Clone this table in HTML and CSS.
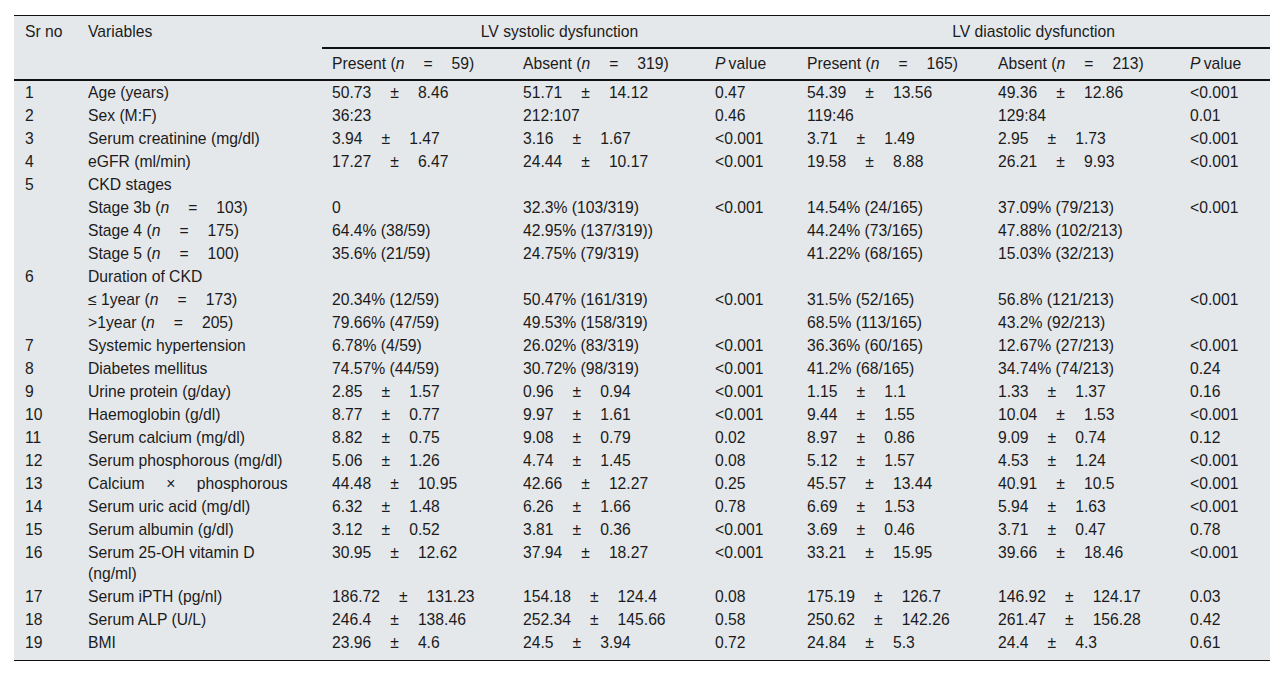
FILE: index.html
```html
<!DOCTYPE html>
<html lang="en">
<head>
<meta charset="utf-8">
<title>LV dysfunction table</title>
<link rel="stylesheet" href="styles.css">
</head>
<body>
<table class="tbl">
  <colgroup>
    <col class="c-sr"><col class="c-var"><col class="c-pres"><col class="c-abs"><col class="c-p"><col class="c-pres"><col class="c-abs"><col class="c-p2">
  </colgroup>
  <thead>
    <tr class="h1">
      <th rowspan="2" class="sr">Sr no</th>
      <th rowspan="2">Variables</th>
      <th colspan="3" class="grp">LV systolic dysfunction</th>
      <th colspan="3" class="grp">LV diastolic dysfunction</th>
    </tr>
    <tr class="h2">
      <th>Present (<i>n</i><span class="op">=</span>59)</th>
      <th>Absent (<i>n</i><span class="op">=</span>319)</th>
      <th><i>P</i>&thinsp;value</th>
      <th>Present (<i>n</i><span class="op">=</span>165)</th>
      <th>Absent (<i>n</i><span class="op">=</span>213)</th>
      <th><i>P</i>&thinsp;value</th>
    </tr>
  </thead>
  <tbody>
    <tr><td class="sr">1</td><td>Age (years)</td><td>50.73<span class="op">±</span>8.46</td><td>51.71<span class="op">±</span>14.12</td><td>0.47</td><td>54.39<span class="op">±</span>13.56</td><td>49.36<span class="op">±</span>12.86</td><td>&lt;0.001</td></tr>
    <tr><td class="sr">2</td><td>Sex (M:F)</td><td>36:23</td><td>212:107</td><td>0.46</td><td>119:46</td><td>129:84</td><td>0.01</td></tr>
    <tr><td class="sr">3</td><td>Serum creatinine (mg/dl)</td><td>3.94<span class="op">±</span>1.47</td><td>3.16<span class="op">±</span>1.67</td><td>&lt;0.001</td><td>3.71<span class="op">±</span>1.49</td><td>2.95<span class="op">±</span>1.73</td><td>&lt;0.001</td></tr>
    <tr><td class="sr">4</td><td>eGFR (ml/min)</td><td>17.27<span class="op">±</span>6.47</td><td>24.44<span class="op">±</span>10.17</td><td>&lt;0.001</td><td>19.58<span class="op">±</span>8.88</td><td>26.21<span class="op">±</span>9.93</td><td>&lt;0.001</td></tr>
    <tr><td class="sr">5</td><td>CKD stages</td><td></td><td></td><td></td><td></td><td></td><td></td></tr>
    <tr><td class="sr"></td><td>Stage 3b (<i>n</i><span class="op">=</span>103)</td><td>0</td><td>32.3% (103/319)</td><td>&lt;0.001</td><td>14.54% (24/165)</td><td>37.09% (79/213)</td><td>&lt;0.001</td></tr>
    <tr><td class="sr"></td><td>Stage 4 (<i>n</i><span class="op">=</span>175)</td><td>64.4% (38/59)</td><td>42.95% (137/319))</td><td></td><td>44.24% (73/165)</td><td>47.88% (102/213)</td><td></td></tr>
    <tr><td class="sr"></td><td>Stage 5 (<i>n</i><span class="op">=</span>100)</td><td>35.6% (21/59)</td><td>24.75% (79/319)</td><td></td><td>41.22% (68/165)</td><td>15.03% (32/213)</td><td></td></tr>
    <tr><td class="sr">6</td><td>Duration of CKD</td><td></td><td></td><td></td><td></td><td></td><td></td></tr>
    <tr><td class="sr"></td><td>≤ 1year (<i>n</i><span class="op">=</span>173)</td><td>20.34% (12/59)</td><td>50.47% (161/319)</td><td>&lt;0.001</td><td>31.5% (52/165)</td><td>56.8% (121/213)</td><td>&lt;0.001</td></tr>
    <tr><td class="sr"></td><td>&gt;1year (<i>n</i><span class="op">=</span>205)</td><td>79.66% (47/59)</td><td>49.53% (158/319)</td><td></td><td>68.5% (113/165)</td><td>43.2% (92/213)</td><td></td></tr>
    <tr><td class="sr">7</td><td>Systemic hypertension</td><td>6.78% (4/59)</td><td>26.02% (83/319)</td><td>&lt;0.001</td><td>36.36% (60/165)</td><td>12.67% (27/213)</td><td>&lt;0.001</td></tr>
    <tr><td class="sr">8</td><td>Diabetes mellitus</td><td>74.57% (44/59)</td><td>30.72% (98/319)</td><td>&lt;0.001</td><td>41.2% (68/165)</td><td>34.74% (74/213)</td><td>0.24</td></tr>
    <tr><td class="sr">9</td><td>Urine protein (g/day)</td><td>2.85<span class="op">±</span>1.57</td><td>0.96<span class="op">±</span>0.94</td><td>&lt;0.001</td><td>1.15<span class="op">±</span>1.1</td><td>1.33<span class="op">±</span>1.37</td><td>0.16</td></tr>
    <tr><td class="sr">10</td><td>Haemoglobin (g/dl)</td><td>8.77<span class="op">±</span>0.77</td><td>9.97<span class="op">±</span>1.61</td><td>&lt;0.001</td><td>9.44<span class="op">±</span>1.55</td><td>10.04<span class="op">±</span>1.53</td><td>&lt;0.001</td></tr>
    <tr><td class="sr">11</td><td>Serum calcium (mg/dl)</td><td>8.82<span class="op">±</span>0.75</td><td>9.08<span class="op">±</span>0.79</td><td>0.02</td><td>8.97<span class="op">±</span>0.86</td><td>9.09<span class="op">±</span>0.74</td><td>0.12</td></tr>
    <tr><td class="sr">12</td><td>Serum phosphorous (mg/dl)</td><td>5.06<span class="op">±</span>1.26</td><td>4.74<span class="op">±</span>1.45</td><td>0.08</td><td>5.12<span class="op">±</span>1.57</td><td>4.53<span class="op">±</span>1.24</td><td>&lt;0.001</td></tr>
    <tr><td class="sr">13</td><td>Calcium<span class="op wide">×</span>phosphorous</td><td>44.48<span class="op">±</span>10.95</td><td>42.66<span class="op">±</span>12.27</td><td>0.25</td><td>45.57<span class="op">±</span>13.44</td><td>40.91<span class="op">±</span>10.5</td><td>&lt;0.001</td></tr>
    <tr><td class="sr">14</td><td>Serum uric acid (mg/dl)</td><td>6.32<span class="op">±</span>1.48</td><td>6.26<span class="op">±</span>1.66</td><td>0.78</td><td>6.69<span class="op">±</span>1.53</td><td>5.94<span class="op">±</span>1.63</td><td>&lt;0.001</td></tr>
    <tr><td class="sr">15</td><td>Serum albumin (g/dl)</td><td>3.12<span class="op">±</span>0.52</td><td>3.81<span class="op">±</span>0.36</td><td>&lt;0.001</td><td>3.69<span class="op">±</span>0.46</td><td>3.71<span class="op">±</span>0.47</td><td>0.78</td></tr>
    <tr><td class="sr">16</td><td>Serum 25-OH vitamin D<br>(ng/ml)</td><td>30.95<span class="op">±</span>12.62</td><td>37.94<span class="op">±</span>18.27</td><td>&lt;0.001</td><td>33.21<span class="op">±</span>15.95</td><td>39.66<span class="op">±</span>18.46</td><td>&lt;0.001</td></tr>
    <tr><td class="sr">17</td><td>Serum iPTH (pg/nl)</td><td>186.72<span class="op">±</span>131.23</td><td>154.18<span class="op">±</span>124.4</td><td>0.08</td><td>175.19<span class="op">±</span>126.7</td><td>146.92<span class="op">±</span>124.17</td><td>0.03</td></tr>
    <tr><td class="sr">18</td><td>Serum ALP (U/L)</td><td>246.4<span class="op">±</span>138.46</td><td>252.34<span class="op">±</span>145.66</td><td>0.58</td><td>250.62<span class="op">±</span>142.26</td><td>261.47<span class="op">±</span>156.28</td><td>0.42</td></tr>
    <tr class="last"><td class="sr">19</td><td>BMI</td><td>23.96<span class="op">±</span>4.6</td><td>24.5<span class="op">±</span>3.94</td><td>0.72</td><td>24.84<span class="op">±</span>5.3</td><td>24.4<span class="op">±</span>4.3</td><td>0.61</td></tr>
  </tbody>
</table>
</body>
</html>
```

FILE: styles.css
```css
html, body {
  margin: 0;
  padding: 0;
  background: #ffffff;
}

body {
  font-family: "Liberation Sans", Arial, Helvetica, sans-serif;
  font-size: 15.7px;
  line-height: 21px;
  color: #1b1b1b;
}

.tbl {
  margin: 15px 0 0 14px;
  width: 1256px;
  table-layout: fixed;
  border-collapse: separate;
  border-spacing: 0;
  background: #e5e8eb;
  border-top: 1px solid #111;
  border-bottom: 1px solid #111;
}

.c-sr { width: 64px; }
.c-var { width: 244px; }
.c-pres { width: 191px; }
.c-abs { width: 192px; }
.c-p { width: 92px; }
.c-p2 { width: 90px; }

.tbl th,
.tbl td {
  text-align: left;
  vertical-align: top;
  font-weight: normal;
  padding: 1px 4px 1px 10px;
  white-space: nowrap;
}

.tbl .sr {
  padding-left: 11px;
}

.tbl thead th {
  border-bottom: 2px solid #111;
}

.tbl .h1 th {
  padding-top: 5px;
  padding-bottom: 5px;
}

.tbl .h1 th.grp {
  text-align: center;
  padding-left: 0;
  padding-right: 0;
}

.tbl .h2 th {
  padding-top: 4px;
  padding-bottom: 5px;
}

.tbl .last td {
  padding-bottom: 7px;
}

.op {
  margin: 0 19px;
}

.op.wide {
  margin: 0 21.5px;
}
```
